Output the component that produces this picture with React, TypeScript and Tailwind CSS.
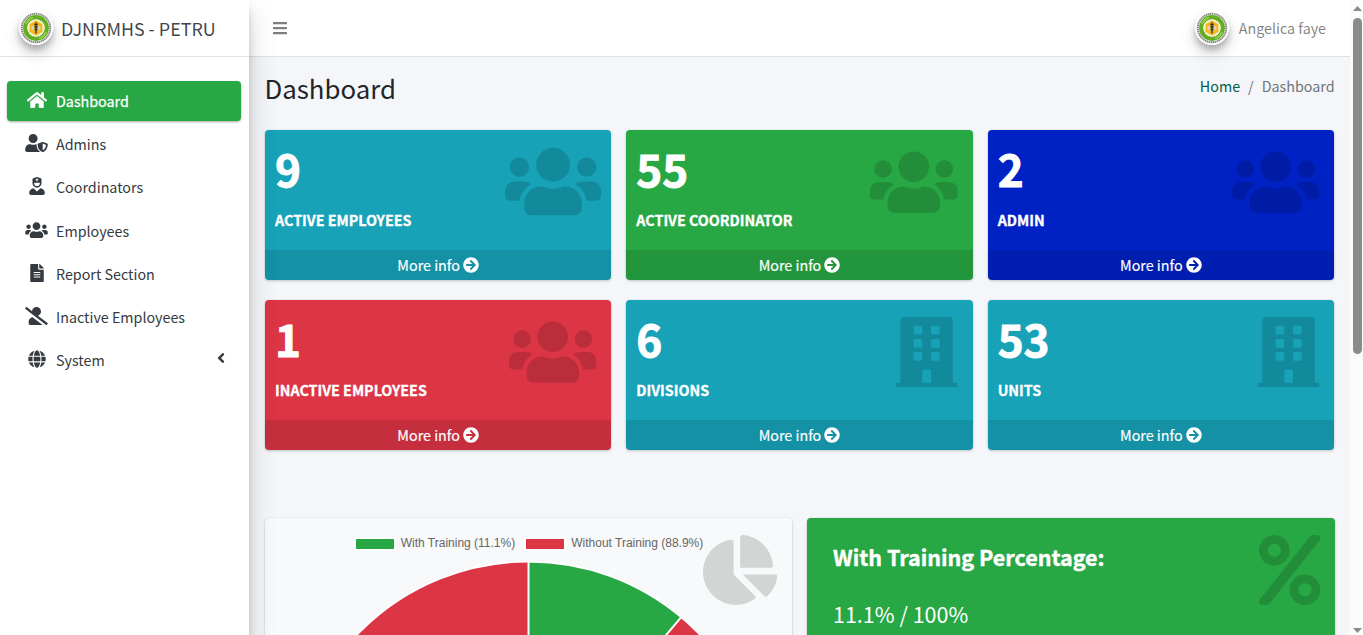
import React from "react";
import type { IconType } from "react-icons";
import {
  FaAngleLeft,
  FaArrowCircleRight,
  FaBars,
  FaBuilding,
  FaChartPie,
  FaFileAlt,
  FaGlobe,
  FaHome,
  FaPercent,
  FaUserNurse,
  FaUserShield,
  FaUserSlash,
  FaUsers,
} from "react-icons/fa";

function Seal() {
  return (
    <svg
      viewBox="0 0 34 34"
      className="mb-px size-[34px] shrink-0 rounded-full shadow-[0_8px_16px_rgba(0,0,0,0.17),0_5px_6px_rgba(0,0,0,0.22)]"
    >
      <circle cx="17" cy="17" r="17" fill="#fff" />
      <circle cx="17" cy="17" r="14.2" fill="none" stroke="#85897f" strokeWidth="2" strokeDasharray="1.5 0.5" />
      <circle cx="17" cy="17" r="10.8" fill="none" stroke="#62ae20" strokeWidth="4.2" />
      <path d="M7 13A10.8 10.8 0 0 1 14 6.6M27 21A10.8 10.8 0 0 1 20 27.4" stroke="#93cf48" strokeWidth="2" fill="none" />
      <circle cx="17" cy="17" r="8.4" fill="#f3eeca" />
      <path d="M17 9.6l6.4 3.6v7.6L17 24.4l-6.4-3.6v-7.6z" fill="#f2b81a" />
      <path d="M12.6 15h2.6v4.2h-2.6zM18.8 15h2.6v4.2h-2.6z" fill="#d9d3b2" />
      <path d="M17 11.5v11M15.2 13.5h3.6M15.4 16h3.2M15.6 18.5h2.8" stroke="#333" strokeWidth="1.3" fill="none" />
    </svg>
  );
}

const nav: { label: string; icon: IconType; size: string; active?: boolean; caret?: boolean }[] = [
  { label: "Dashboard", icon: FaHome, size: "h-[18px] w-[22px]", active: true },
  { label: "Admins", icon: FaUserShield, size: "h-[18px] w-[23px]" },
  { label: "Coordinators", icon: FaUserNurse, size: "h-[18px] w-[16px]" },
  { label: "Employees", icon: FaUsers, size: "h-[18px] w-[23px]" },
  { label: "Report Section", icon: FaFileAlt, size: "h-[18px] w-[14px]" },
  { label: "Inactive Employees", icon: FaUserSlash, size: "h-[18px] w-[23px]" },
  { label: "System", icon: FaGlobe, size: "h-[18px] w-[18px]", caret: true },
];

function Sidebar() {
  return (
    <aside className="relative z-10 flex w-[249px] shrink-0 flex-col bg-white shadow-[0_14px_28px_rgba(0,0,0,0.16),0_10px_8px_rgba(0,0,0,0.16)]">
      <div className="flex h-[57px] shrink-0 items-center border-b border-[#dee2e6] pl-[19px]">
        <Seal />
        <span className="mb-px ml-2 text-[17.9px] leading-[30px] text-[#343a40]/95">DJNRMHS - PETRU</span>
      </div>
      <nav className="mt-6 flex flex-col gap-[3.2px] pl-[7px] pr-2">
        {nav.map(({ label, icon: Icon, size, active, caret }) => (
          <a
            key={label}
            className={
              active
                ? "flex h-10 items-center rounded bg-[#28a745] pl-4 text-white shadow-[0_1px_3px_rgba(0,0,0,0.12),0_1px_2px_rgba(0,0,0,0.24)]"
                : "flex h-10 items-center pl-4 text-[#343a40]"
            }
          >
            <span className="flex w-[27px] justify-center pb-[2px]">
              <Icon className={size} />
            </span>
            <span className={active ? "ml-1.5 text-[14.3px] leading-6 [-webkit-text-stroke:0.25px_white]" : "ml-1.5 text-[14.3px] leading-6"}>
              {label}
            </span>
            {caret && <FaAngleLeft className="mb-1 ml-auto mr-3 size-4" />}
          </a>
        ))}
      </nav>
    </aside>
  );
}

const stats: { value: string; label: string; icon: IconType; bg: string; iconClass: string }[] = [
  { value: "9", label: "ACTIVE EMPLOYEES", icon: FaUsers, bg: "bg-[#17a2b8]", iconClass: "right-[10.5px] top-[13px] h-[77px] w-[96.25px]" },
  { value: "55", label: "ACTIVE COORDINATOR", icon: FaUsers, bg: "bg-[#28a745]", iconClass: "right-[15px] top-[17px] h-[70px] w-[87.5px]" },
  { value: "2", label: "ADMIN", icon: FaUsers, bg: "bg-[#0022c4]", iconClass: "right-[15px] top-[17px] h-[70px] w-[87.5px]" },
  { value: "1", label: "INACTIVE EMPLOYEES", icon: FaUsers, bg: "bg-[#dc3545]", iconClass: "right-[15px] top-[17px] h-[70px] w-[87.5px]" },
  { value: "6", label: "DIVISIONS", icon: FaBuilding, bg: "bg-[#17a2b8]", iconClass: "right-[15px] top-[17px] h-[70px] w-[61.25px]" },
  { value: "53", label: "UNITS", icon: FaBuilding, bg: "bg-[#17a2b8]", iconClass: "right-[14.5px] top-[17px] h-[70px] w-[61.25px]" },
];

function StatCard({ value, label, icon: Icon, bg, iconClass }: (typeof stats)[number]) {
  return (
    <div className={`relative flex h-[150px] flex-col overflow-hidden rounded text-white ${bg}`}>
      <div className="flex-1 px-[10px] pt-[7px] font-bold">
        <div className="h-[60px] text-[44px] leading-[62px] [-webkit-text-stroke:0.9px_white]">{value}</div>
        <div className="mt-[11px] text-[14.3px] leading-6 [-webkit-text-stroke:0.3px_white]">{label}</div>
      </div>
      <Icon className={`absolute text-black/15 ${iconClass}`} />
      <div className="flex h-[30px] items-center justify-center gap-[3px] bg-black/10 text-[14.3px] leading-6">
        <span className="text-white [-webkit-text-stroke:0.15px_white]">More info</span>
        <FaArrowCircleRight className="size-4" />
      </div>
    </div>
  );
}

function TrainingChart() {
  return (
    <div className="relative h-[300px] overflow-hidden rounded bg-[#f8f9fa]">
      <div className="flex h-[50px] items-center justify-center gap-[9px] font-['Liberation_Sans',sans-serif] text-[12px] leading-4 text-[#666]">
        <span className="flex items-center gap-[5px]">
          <span className="mt-px h-[14px] w-[42px] border-2 border-white bg-[#28a745]" />
          With Training (11.1%)
        </span>
        <span className="flex items-center gap-[5px]">
          <span className="mt-px h-[14px] w-[42px] border-2 border-white bg-[#dc3545]" />
          Without Training (88.9%)
        </span>
      </div>
      <svg viewBox="0 0 528 250" className="h-[250px] w-full overflow-visible" preserveAspectRatio="xMidYMin slice">
        <g stroke="#fff" strokeWidth="2">
          <circle cx="264" cy="231" r="237.5" fill="#dc3545" />
          <path d="M264 231V-6.5A237.5 237.5 0 0 1 416.7 49.1Z" fill="#28a745" />
        </g>
      </svg>
      <FaChartPie className="absolute right-[15px] top-[17px] h-[70px] w-[74.4px] text-black/15" />
    </div>
  );
}

export default function App() {
  return (
    <div className="flex h-[635px] w-[1363px] overflow-hidden bg-[#f4f6f9] font-['Noto_Sans_CJK_SC','Noto_Sans',sans-serif] text-[#212529]">
      <Sidebar />
      <div className="flex min-w-0 flex-1 flex-col">
        <header className="flex h-[57px] shrink-0 items-center justify-between border-b border-[#dee2e6] bg-white pl-[23px] pr-6">
          <FaBars className="size-4 text-[#7f7f7f]" />
          <div className="flex items-center gap-[9.5px]">
            <Seal />
            <span className="text-[14.3px] leading-6 text-black/50">Angelica faye</span>
          </div>
        </header>
        <main className="px-4">
          <div className="flex h-[73px] justify-between pt-[13px]">
            <h1 className="-ml-[0.5px] text-[25.8px] leading-[35px]">Dashboard</h1>
            <div className="-mr-[0.5px] flex gap-2 pt-1 text-[14.3px] leading-6 text-[#6c757d]">
              <span className="text-[#005c4b]">Home</span>
              <span>/</span>
              <span>Dashboard</span>
            </div>
          </div>
          <div className="grid grid-cols-3 gap-x-[15px] gap-y-5">
            {stats.map((s) => (
              <div key={s.label} className="rounded shadow-[0_0_1px_rgba(0,0,0,0.125),0_1px_3px_rgba(0,0,0,0.2)]">
                <StatCard {...s} />
              </div>
            ))}
          </div>
          <div className="-mr-px mt-[68px] grid grid-cols-[527px_528px] gap-[15px]">
            <div className="rounded shadow-[0_0_1px_rgba(0,0,0,0.125),0_1px_3px_rgba(0,0,0,0.2)]">
              <TrainingChart />
            </div>
            <div className="relative h-[300px] rounded bg-[#28a745] px-[26px] pt-[21px] text-white shadow-[0_0_1px_rgba(0,0,0,0.125),0_1px_3px_rgba(0,0,0,0.2)]">
              <div className="text-[21.5px] font-bold leading-9 [-webkit-text-stroke:0.4px_white]">With Training Percentage:</div>
              <div className="mt-[21px] text-[21.5px] leading-9">11.1% / 100%</div>
              <FaPercent className="absolute right-[15px] top-[17px] h-[70px] w-[61.25px] text-black/15" />
            </div>
          </div>
        </main>
      </div>
      <div className="flex w-[13px] shrink-0 flex-col items-center justify-between bg-[#fcfcfc] pb-0.5 pl-0.5 pt-[6px]">
        <div className="flex flex-col items-center gap-[7px]">
          <svg viewBox="0 0 9 5" className="h-[5px] w-[9px]"><path d="M4.5 0L9 5H0z" fill="#8b8b8b" /></svg>
          <div className="h-[336px] w-[9px] rounded-full bg-[#8b8b8b]" />
        </div>
        <svg viewBox="0 0 9 5" className="h-[5px] w-[9px]"><path d="M0 0h9L4.5 5z" fill="#8b8b8b" /></svg>
      </div>
    </div>
  );
}
